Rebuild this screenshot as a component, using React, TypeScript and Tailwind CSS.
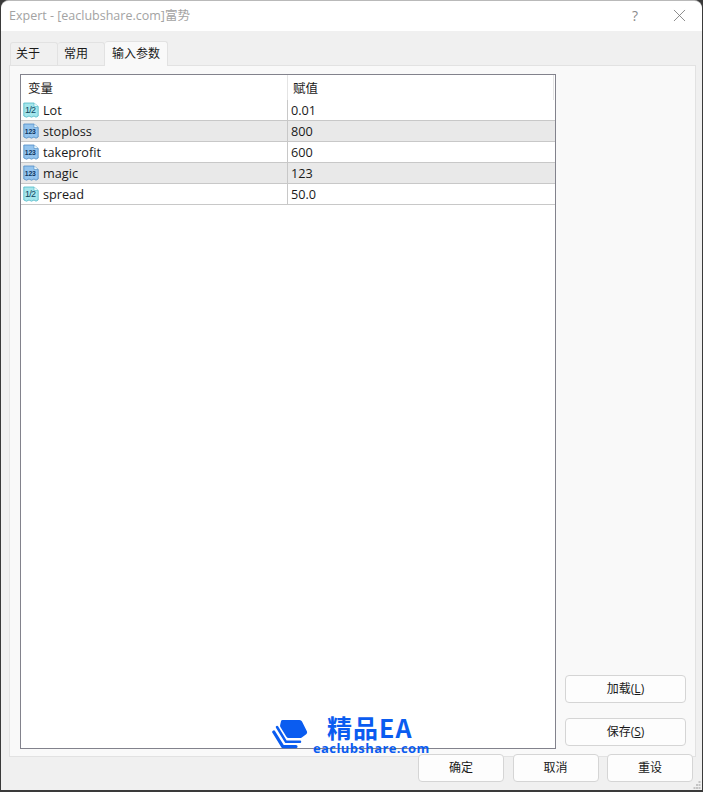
import { X } from 'lucide-react';

const params = [
  { name: 'Lot', value: '0.01', kind: 'double' },
  { name: 'stoploss', value: '800', kind: 'int' },
  { name: 'takeprofit', value: '600', kind: 'int' },
  { name: 'magic', value: '123', kind: 'int' },
  { name: 'spread', value: '50.0', kind: 'double' },
];

function ParamIcon({ kind }: { kind: string }) {
  const isInt = kind === 'int';
  const edge = isInt ? '#4f8cc4' : '#4fb8c6';
  return (
    <svg width="16" height="16" viewBox="0 0 16 16" className="shrink-0">
      <path
        d="M0.8 1 H11 L15.2 4.5 V14 L13 15.2 L11 14 L8.5 15.2 L6 14 L3.5 15.2 L0.8 14 Z"
        fill={isInt ? '#94c4ee' : '#a5e6ec'}
        stroke={edge}
        strokeWidth="0.8"
      />
      <path d="M11 1 V4.5 H15.2" fill="#eef9fb" stroke={edge} strokeWidth="0.6" />
      <text
        x="7.2"
        y="11.4"
        textAnchor="middle"
        fontSize={isInt ? '6.8' : '9'}
        fontWeight={isInt ? '700' : '400'}
        letterSpacing={isInt ? '-0.2' : '-0.7'}
        fontFamily="'Liberation Sans', sans-serif"
        fill={isInt ? '#0f3560' : '#0e4560'}
      >
        {isInt ? '123' : '1/2'}
      </text>
    </svg>
  );
}

function DialogButton({ label, className }: { label: React.ReactNode; className: string }) {
  return (
    <button className={`h-[28px] rounded-[4px] border border-[#d5d5d5] bg-[#fdfdfd] text-[12px] text-[#1a1a1a] ${className}`}>
      {label}
    </button>
  );
}

export default function App() {
  return (
    <div className="relative h-[792px] w-[703px] overflow-hidden bg-[#3a3a3a] font-['Open_Sans','Noto_Sans_CJK_SC',sans-serif]">
      <div className="ml-px mr-px flex h-[790px] flex-col rounded-t-[8px] border-t border-[#b9b9b9] bg-[#f0f0f0]">
        {/* title bar */}
        <div className="flex h-[30px] shrink-0 items-center rounded-t-[8px] bg-white pl-[8px] text-[12.5px] text-[#a3a3a3]">
          <span className="flex-1">Expert - [eaclubshare.com]富势</span>
          <span className="mr-[31px] -mt-[2px] text-[14px] text-[#8a8a8a]">?</span>
          <X size={21} strokeWidth={0.9} className="mr-[12px] -mt-[2px] text-[#6f6f6f]" />
        </div>

        {/* tabs */}
        <div className="flex h-[34px] shrink-0 items-end pl-[9px] text-[12px] text-[#1a1a1a]">
          <div className="flex h-[23px] w-[48px] items-center rounded-t-[3px] border border-b-0 border-[#e2e2e2] pl-[5px]">关于</div>
          <div className="flex h-[23px] w-[47px] items-center rounded-t-[3px] border border-b-0 border-l-0 border-[#e2e2e2] pl-[6px]">常用</div>
          <div className="-mb-px z-10 flex h-[25px] w-[63px] items-center rounded-t-[3px] border border-b-0 border-l-0 border-[#e2e2e2] bg-[#f9f9f9] pl-[7px]">输入参数</div>
        </div>

        {/* panel */}
        <div className="ml-[8px] mr-[6px] flex h-[692px] shrink-0 gap-[9px] border border-[#e2e2e2] bg-[#f9f9f9] pl-[10px] pr-[9px] pt-[8px]">
          <div className="h-[675px] w-[536px] shrink-0 border border-[#82828c] bg-white text-[12.7px] text-[#1a1a1a]">
            <div className="flex h-[25px] text-[12.5px]">
              <div className="h-full w-[267px] border-r border-[#e4e4e4] pl-[7px] pt-px leading-[26px]">变量</div>
              <div className="h-full w-[266px] border-r border-[#e4e4e4] pl-[5px] pt-px leading-[26px]">赋值</div>
            </div>
            {params.map((p, i) => (
              <div key={p.name} className={`flex h-[21px] w-[534px] items-center border-b border-[#c8c8c8] ${i % 2 === 1 ? 'bg-[#e9e9e9]' : 'bg-white'}`}>
                <div className="flex h-full w-[267px] items-center gap-[4px] border-r border-[#c8c8c8] pl-[2px]">
                  <ParamIcon kind={p.kind} />
                  <span className="pt-px">{p.name}</span>
                </div>
                <div className="pl-[3px] pt-px">{p.value}</div>
              </div>
            ))}
          </div>
          <div className="flex flex-1 flex-col justify-end gap-[15px] pb-[10px]">
            <DialogButton className="w-[121px]" label={<>加载(<u>L</u>)</>} />
            <DialogButton className="w-[121px]" label={<>保存(<u>S</u>)</>} />
          </div>
        </div>

        {/* bottom buttons */}
        <div className="-mt-[3px] flex justify-end gap-[8.5px] pr-[9px]">
          <DialogButton className="z-10 w-[86px]" label="确定" />
          <DialogButton className="z-10 w-[86px]" label="取消" />
          <DialogButton className="z-10 w-[86px]" label="重设" />
        </div>
      </div>

      {/* resize grip */}
      <svg width="8" height="8" viewBox="0 0 8 8" className="absolute left-[693px] top-[781px]" fill="#c4c4c4">
        <rect x="5.5" y="0" width="2" height="2" />
        <rect x="3" y="3" width="2" height="2" />
        <rect x="5.5" y="3" width="2" height="2" />
        <rect x="0.5" y="6" width="2" height="2" />
        <rect x="3" y="6" width="2" height="2" />
        <rect x="5.5" y="6" width="2" height="2" />
      </svg>

      {/* watermark */}
      <div className="absolute left-[272px] top-[714px] flex items-start">
        <svg width="37" height="30" viewBox="0 0 37 30" className="mt-[6px] shrink-0" fill="none">
          <path d="M10.5 0 H27.5 Q29.3 0 30 1.6 L35 11.5 Q35.6 13 34.2 14.2 L29.8 17.4 Q29 18 28 18 H16.5 Q15.2 18 14.4 16.8 L8.4 7 Q7.8 6 8.2 4.8 L9 1.2 Q9.3 0 10.5 0 Z" fill="#0a5cf0" />
          <path d="M5 7 L14 21.8 H28" stroke="#0a5cf0" strokeWidth="2.5" strokeLinecap="round" strokeLinejoin="round" />
          <path d="M1.8 12 L10.8 26.6 H24" stroke="#0a5cf0" strokeWidth="3.2" strokeLinecap="round" strokeLinejoin="round" />
        </svg>
        <div className="ml-[4px] flex flex-col items-center font-bold text-[#0a5cf0]">
          <div className="mr-[3px] text-[25px] leading-[26px] tracking-[1px] font-['Noto_Sans_CJK_SC','Open_Sans',sans-serif]">精品EA</div>
          <div className="mt-px text-[13px] leading-[14px] tracking-[0.4px] font-['Open_Sans',sans-serif]">eaclubshare.com</div>
        </div>
      </div>
    </div>
  );
}
